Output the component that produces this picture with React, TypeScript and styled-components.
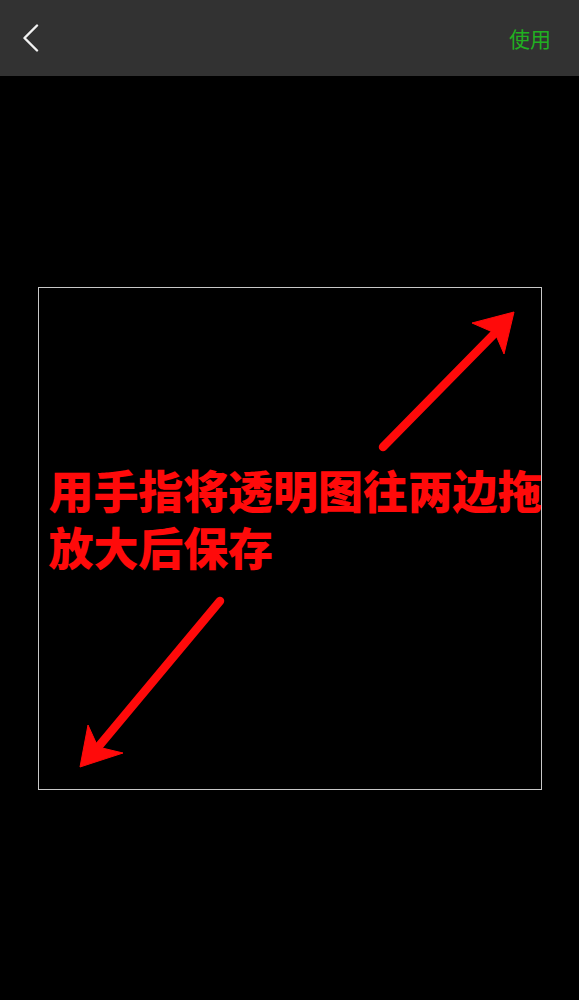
import React from "react";
import styled, { createGlobalStyle } from "styled-components";

const Global = createGlobalStyle`
  html, body { margin: 0; padding: 0; background: #000; }
  body { font-family: "Noto Sans CJK SC", "Noto Sans", sans-serif; }
  #root { height: 1000px; }
`;

const Page = styled.div`
  width: 579px;
  height: 1000px;
  display: flex;
  flex-direction: column;
  background: #000;
  overflow: hidden;
`;

const TopBar = styled.header`
  height: 76px;
  flex: none;
  background: #323232;
  display: flex;
  align-items: center;
  justify-content: space-between;
  padding: 0 28px 0 22px;
  box-sizing: border-box;
`;

const BackButton = styled.button`
  background: none;
  border: none;
  padding: 0;
  width: 20px;
  height: 30px;
  display: flex;
  align-items: center;
  cursor: pointer;
`;

const UseButton = styled.button`
  background: none;
  border: none;
  padding: 0;
  color: #21b021;
  font-family: "Noto Sans CJK SC", sans-serif;
  font-size: 21px;
  line-height: 28px;
  cursor: pointer;
`;

const Stage = styled.main`
  flex: 1;
  display: flex;
  align-items: center;
  justify-content: center;
`;

const CropFrame = styled.div`
  position: relative;
  width: 504px;
  height: 503px;
  box-sizing: border-box;
  border: 1px solid #c8c8c8;
  padding: 173px 0 0 10px;
`;

const HintText = styled.div`
  position: relative;
  white-space: pre;
  color: #ff0a0a;
  font-family: "Noto Sans CJK SC", sans-serif;
  font-weight: 900;
  font-size: 45px;
  line-height: 57px;
  letter-spacing: -0.1px;
`;

const ArrowLayer = styled.svg`
  position: absolute;
  left: 0;
  top: 0;
  width: 502px;
  height: 501px;
  pointer-events: none;
`;

export default function App() {
  return (
    <>
      <Global />
      <Page>
        <TopBar>
          <BackButton aria-label="返回">
            <svg width="18" height="28" viewBox="0 0 18 28">
              <polyline
                points="15,1.5 2.5,14 15,26.5"
                fill="none"
                stroke="#f2f2f2"
                strokeWidth="2.4"
                strokeLinecap="round"
                strokeLinejoin="round"
              />
            </svg>
          </BackButton>
          <UseButton>使用</UseButton>
        </TopBar>
        <Stage>
          <CropFrame>
            <ArrowLayer viewBox="0 0 502 501">
              <g fill="#ff0a0a" stroke="#ff0a0a">
                <line x1="344" y1="159" x2="458" y2="43" strokeWidth="8.5" strokeLinecap="round" />
                <polygon points="475,24 433,35 456,45 465,66" strokeWidth="1" strokeLinejoin="round" />
                <line x1="181" y1="313" x2="60" y2="458" strokeWidth="8.5" strokeLinecap="round" />
                <polygon points="41,479 49,437 59,459 84,465" strokeWidth="1" strokeLinejoin="round" />
              </g>
            </ArrowLayer>
            <HintText>{"用手指将透明图往两边拖\n放大后保存"}</HintText>
          </CropFrame>
        </Stage>
      </Page>
    </>
  );
}
